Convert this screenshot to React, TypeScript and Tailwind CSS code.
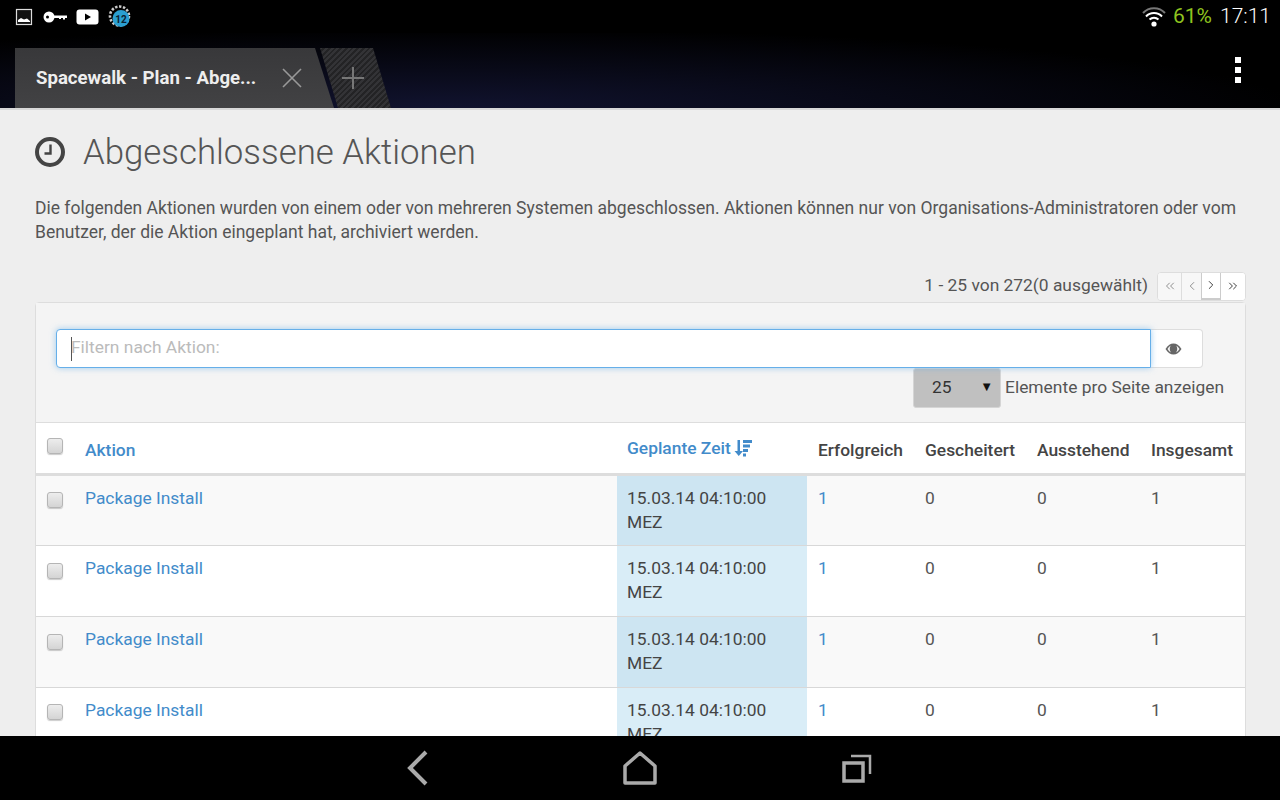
import React from "react";
import { ChevronLeft, ChevronRight, ChevronsLeft, ChevronsRight } from "lucide-react";

const rows = [0, 1, 2, 3];

function StatusLeft() {
  return (
    <div className="flex items-center">
      <svg width="18" height="18" viewBox="0 0 18 18" className="ml-[15px]">
        <rect x="1.5" y="1.5" width="15" height="15" fill="#111" stroke="#ddd" strokeWidth="1.2" />
        <path d="M3 14 L3 12 L6 10 L9 11.5 L12 10.5 L15 13 L15 14 Z" fill="#fff" />
      </svg>
      <svg width="26" height="14" viewBox="0 0 26 14" className="ml-[10px]">
        <circle cx="6" cy="7" r="5.5" fill="#fff" />
        <circle cx="4.5" cy="7" r="1.5" fill="#000" />
        <path d="M10 5.5 H24 V8 H22 V9.5 H20 V8 H18 V9 H16 V8 H10 Z" fill="#fff" />
      </svg>
      <svg width="23" height="16" viewBox="0 0 23 16" className="ml-[7px]">
        <rect x="0.5" y="0.5" width="22" height="15" rx="3" fill="#fff" />
        <path d="M9 4.5 L15 8 L9 11.5 Z" fill="#000" />
      </svg>
      <svg width="24" height="24" viewBox="0 0 24 24" className="ml-[9px]">
        <circle cx="11.5" cy="11" r="9.5" fill="none" stroke="#ccc" strokeWidth="2.6" strokeDasharray="2.4 1.6" />
        <circle cx="13" cy="13.5" r="8.5" fill="#2b9fd1" />
        <text x="13" y="17.5" textAnchor="middle" fontSize="10" fontWeight="700" fill="#0b2233" fontFamily="Roboto, sans-serif">12</text>
      </svg>
    </div>
  );
}

function Wifi() {
  return (
    <svg width="26" height="22" viewBox="0 0 26 22" className="-mt-[2px]">
      <path d="M2 8 A15 15 0 0 1 24 8" fill="none" stroke="#777" strokeWidth="2" />
      <path d="M5 11.5 A11 11 0 0 1 21 11.5" fill="none" stroke="#fff" strokeWidth="2" />
      <path d="M8.5 14.5 A7 7 0 0 1 17.5 14.5" fill="none" stroke="#fff" strokeWidth="2" />
      <circle cx="13" cy="19" r="2.6" fill="#fff" />
    </svg>
  );
}

function Checkbox() {
  return (
    <span className="block w-[16px] h-[16px] rounded-[3px] border border-[#b5b5b5] bg-gradient-to-b from-[#ededed] to-[#d4d4d4] shadow-[0_1px_1px_rgba(0,0,0,0.2)]" />
  );
}

function SortIcon() {
  return (
    <svg width="18" height="18" viewBox="0 0 18 18" fill="#428bca" className="ml-[3px]">
      <path d="M3.5 1 H6 V12 H9 L4.75 17 L0.5 12 H3.5 Z" />
      <rect x="9" y="1" width="9" height="3" />
      <rect x="9" y="5.5" width="7" height="3" />
      <rect x="9" y="10" width="5" height="3" />
      <rect x="9" y="14.5" width="3" height="3" />
    </svg>
  );
}

function EyeFilled() {
  return (
    <svg width="17" height="12" viewBox="0 0 17 12">
      <path d="M0.5 6 C3 2 5.5 0.5 8.5 0.5 C11.5 0.5 14 2 16.5 6 C14 10 11.5 11.5 8.5 11.5 C5.5 11.5 3 10 0.5 6 Z" fill="#666" />
      <path d="M2.5 6 C4 3.6 5 2.8 6 2.4 C5 3.4 4.8 4.6 4.8 6 C4.8 7.4 5.3 8.6 6.2 9.5 C5 9 4 8.3 2.5 6 Z" fill="#f4f4f4" />
      <path d="M14.5 6 C13 3.6 12 2.8 11 2.4 C12 3.4 12.2 4.6 12.2 6 C12.2 7.4 11.7 8.6 10.8 9.5 C12 9 13 8.3 14.5 6 Z" fill="#f4f4f4" />
    </svg>
  );
}

function Pager() {
  return (
    <div className="flex ml-[9px] border border-[#ddd] rounded-[4px] overflow-hidden bg-white h-[29px] text-[#888]">
      <span className="w-[23px] flex items-center justify-center bg-[#f7f7f7]"><ChevronsLeft size={14} strokeWidth={1.6} /></span>
      <span className="w-[20px] flex items-center justify-center bg-[#f7f7f7] border-l border-[#ddd]"><ChevronLeft size={14} strokeWidth={1.6} /></span>
      <span className="w-[20px] flex items-center justify-center bg-white border-x border-b-2 border-[#ccc] text-[#333]"><ChevronRight size={14} strokeWidth={1.6} /></span>
      <span className="w-[24px] flex items-center justify-center bg-white text-[#333]"><ChevronsRight size={14} strokeWidth={1.6} /></span>
    </div>
  );
}

export default function App() {
  return (
    <div className="w-[1280px] h-[800px] flex flex-col overflow-hidden bg-black font-['Roboto',sans-serif]">
      <div className="h-[33px] shrink-0 bg-black flex items-center justify-between pr-[9px]">
        <StatusLeft />
        <div className="flex items-center">
          <Wifi />
          <span className="ml-[6px] text-[21px] text-[#8fc31f]">61%</span>
          <span className="ml-[8px] text-[21px] font-light text-white">17:11</span>
        </div>
      </div>

      <div className="h-[75px] shrink-0 flex items-end justify-between bg-[radial-gradient(ellipse_850px_80px_at_35%_100%,#11132f,#000)]">
        <div className="flex items-end ml-[15px]">
          <div className="relative w-[319px] h-[60px] bg-gradient-to-b from-[#38383a] to-[#424244] [clip-path:polygon(0_0,300px_0,319px_100%,0_100%)] flex items-center pl-[21px] pt-[2px]">
            <span className="text-[18.6px] font-bold text-[#eee] whitespace-nowrap">Spacewalk - Plan - Abge...</span>
            <svg width="20" height="20" viewBox="0 0 20 20" className="absolute left-[267px] top-[20px]">
              <path d="M1 1 L19 19 M19 1 L1 19" stroke="#999" strokeWidth="1.6" />
            </svg>
          </div>
          <div className="relative -ml-[14px] w-[71px] h-[60px] [clip-path:polygon(0_0,53px_0,71px_100%,18px_100%)] bg-[repeating-linear-gradient(135deg,#333336_0px,#333336_2px,#232325_2px,#232325_4px)]">
            <svg width="24" height="24" viewBox="0 0 24 24" className="absolute left-[21px] top-[18px]">
              <path d="M12 1 V23 M1 12 H23" stroke="#777" strokeWidth="2" />
            </svg>
          </div>
        </div>
        <div className="flex flex-col gap-[4px] mr-[39px] mb-[25px]">
          <span className="block w-[6px] h-[6px] bg-white" />
          <span className="block w-[6px] h-[6px] bg-white" />
          <span className="block w-[6px] h-[6px] bg-white" />
        </div>
      </div>

      <div className="flex-1 min-h-0 overflow-hidden bg-[#eeeeee] border-t-2 border-[#d8d8d8] px-[35px] text-[#555]">
        <div className="flex items-center mt-[20px] h-[44px]">
          <svg width="30" height="30" viewBox="0 0 30 30">
            <circle cx="15" cy="15" r="13" fill="none" stroke="#444" strokeWidth="4" />
            <path d="M15.5 7.5 V16.5 H9.5" fill="none" stroke="#444" strokeWidth="2.4" />
          </svg>
          <h1 className="ml-[18px] text-[34.8px] font-light text-[#555] leading-none whitespace-nowrap">Abgeschlossene Aktionen</h1>
        </div>
        <p className="mt-[22px] text-[17.5px] leading-[24px] text-[#555] w-[1205px]">
          Die folgenden Aktionen wurden von einem oder von mehreren Systemen abgeschlossen. Aktionen können nur von Organisations-Administratoren oder vom Benutzer, der die Aktion eingeplant hat, archiviert werden.
        </p>
        <div className="mt-[27px] h-[30px] flex items-center justify-end w-[1211px] text-[17.4px]">
          <span className="pb-[2px]">1 - 25 von 272(0 ausgewählt)</span>
          <Pager />
        </div>

        <div className="mt-[1px] w-[1211px] border border-[#ddd] rounded-t-[4px] bg-white">
          <div className="h-[120px] bg-[#f4f4f4] border-b border-[#ddd] pt-[26px] pl-[20px] pr-[21px]">
            <div className="flex w-[1147px] h-[39px]">
              <div className="relative flex-1 flex items-center pl-[14px] pb-[2px] bg-white border border-[#66afe9] rounded-l-[4px] shadow-[0_0_6px_rgba(102,175,233,0.6)] text-[17.4px] text-[#bbb]">
                <span className="absolute left-[14px] top-[7px] w-px h-[24px] bg-[#555]" />
                Filtern nach Aktion:
              </div>
              <div className="w-[52px] flex items-center pl-[14px] bg-white border border-l-0 border-[#ddd] rounded-r-[4px]">
                <EyeFilled />
              </div>
            </div>
            <div className="flex justify-end items-center h-[40px] text-[17.4px]">
              <div className="w-[88px] h-[40px] flex items-center justify-between pl-[18px] pr-[7px] pb-[2px] bg-[#c0c0c0] border border-[#d5d5d5] rounded-[3px] text-[#333]">
                <span>25</span>
                <span className="text-[13px] text-[#111]">▼</span>
              </div>
              <span className="ml-[4px] pb-[2px] whitespace-nowrap">Elemente pro Seite anzeigen</span>
            </div>
          </div>

          <table className="w-[1209px] table-fixed border-collapse text-[17.4px]">
            <colgroup>
              <col className="w-[38px]" />
              <col className="w-[543px]" />
              <col className="w-[190px]" />
              <col className="w-[107px]" />
              <col className="w-[112px]" />
              <col className="w-[115px]" />
              <col className="w-[104px]" />
            </colgroup>
            <thead>
              <tr className="h-[51px] border-b-[3px] border-[#ddd] text-left">
                <th className="pl-[11px] pb-[3px] font-medium"><Checkbox /></th>
                <th className="pl-[11px] pt-[4px] font-medium text-[#428bca]">Aktion</th>
                <th className="pl-[10px] pt-[1px] font-medium text-[#428bca] whitespace-nowrap">
                  <span className="flex items-center">Geplante Zeit<SortIcon /></span>
                </th>
                <th className="pl-[11px] pt-[4px] font-medium text-[#444]">Erfolgreich</th>
                <th className="pl-[11px] pt-[4px] font-medium text-[#444]">Gescheitert</th>
                <th className="pl-[11px] pt-[4px] font-medium text-[#444]">Ausstehend</th>
                <th className="pl-[10px] pt-[4px] font-medium text-[#444]">Insgesamt</th>
              </tr>
            </thead>
            <tbody>
              {rows.map((r) => {
                const odd = r % 2 === 0;
                return (
                  <tr key={r} className={"h-[71px] border-b border-[#d8d8d8] align-top " + (odd ? "bg-[#f9f9f9]" : "bg-white")}>
                    <td className={"pl-[11px] " + (r === 1 || r === 2 ? "pt-[17px]" : "pt-[16px]")}><Checkbox /></td>
                    <td className="pl-[11px] pt-[10px] text-[#428bca] leading-[24px]">Package Install</td>
                    <td className={"pl-[10px] pr-[8px] pt-[10px] leading-[24px] text-[#444] " + (odd ? "bg-[#cde5f2]" : "bg-[#d9edf7]")}>
                      15.03.14 04:10:00 MEZ
                    </td>
                    <td className="pl-[11px] pt-[10px] leading-[24px] text-[#428bca]">1</td>
                    <td className="pl-[11px] pt-[10px] leading-[24px]">0</td>
                    <td className="pl-[11px] pt-[10px] leading-[24px]">0</td>
                    <td className="pl-[10px] pt-[10px] leading-[24px]">1</td>
                  </tr>
                );
              })}
            </tbody>
          </table>
        </div>
      </div>

      <div className="h-[64px] shrink-0 bg-black flex items-center justify-center">
        <svg width="26" height="36" viewBox="0 0 26 36" className="ml-[-3px]">
          <path d="M21 2 L5 18 L21 34" fill="none" stroke="#aaa" strokeWidth="4" />
        </svg>
        <svg width="34" height="36" viewBox="0 0 34 36" className="ml-[192px]">
          <path d="M2 16 L17 3 L32 16 V33 H2 Z" fill="none" stroke="#aaa" strokeWidth="3.5" strokeLinejoin="round" />
        </svg>
        <svg width="30" height="32" viewBox="0 0 30 32" className="ml-[185px]">
          <path d="M2 11 H21 V29 H2 Z" fill="none" stroke="#aaa" strokeWidth="3.5" />
          <path d="M9 4 H28 V22" fill="none" stroke="#aaa" strokeWidth="2.5" />
        </svg>
      </div>
    </div>
  );
}
